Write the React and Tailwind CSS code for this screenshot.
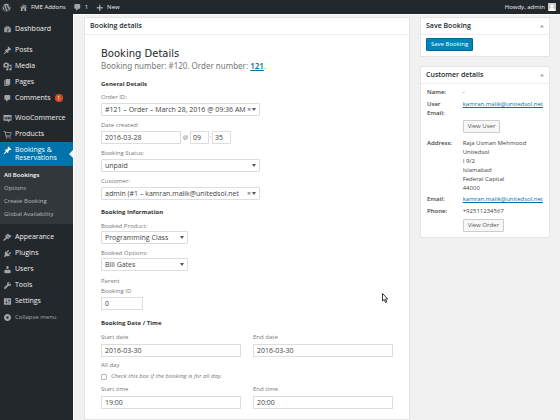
import React, { useState } from 'react';
import { FaWordpress } from 'react-icons/fa';

// 20x20 admin glyphs
const GLYPHS = {
  home: 'M16 8.5l1.53 1.53-1.06 1.06L10 4.6l-6.47 6.49-1.06-1.06L10 2.5l4 4v-2h2v4zm-6-2.46l6 5.99V18H4v-5.97zM12 17v-5H8v5h4z',
  plus: 'M17 9v3h-5v5H9v-5H4V9h5V4h3v5h5z',
  dashboard: 'M3.76 16h12.48c1.1-1.37 1.76-3.11 1.76-5 0-4.42-3.58-8-8-8s-8 3.58-8 8c0 1.89.66 3.63 1.76 5zM10 4c.55 0 1 .45 1 1s-.45 1-1 1-1-.45-1-1 .45-1 1-1zM6 6c.55 0 1 .45 1 1s-.45 1-1 1-1-.45-1-1 .45-1 1-1zm8 0c.55 0 1 .45 1 1s-.45 1-1 1-1-.45-1-1 .45-1 1-1zm-5.37 5.55L12 7v6c0 1.1-.9 2-2 2s-2-.9-2-2c0-.57.24-1.08.63-1.45zM4 10c.55 0 1 .45 1 1s-.45 1-1 1-1-.45-1-1 .45-1 1-1zm12 0c.55 0 1 .45 1 1s-.45 1-1 1-1-.45-1-1 .45-1 1-1zm-5 3c0-.55-.45-1-1-1s-1 .45-1 1 .45 1 1 1 1-.45 1-1z',
  pin: 'M10.44 3.02l1.82-1.82 6.36 6.35-1.83 1.82c-1.05-.68-2.48-.57-3.41.36l-.75.75c-.92.93-1.04 2.35-.35 3.41l-1.83 1.82-2.41-2.41-2.8 2.79c-.42.42-3.38 2.71-3.8 2.29s1.86-3.39 2.28-3.81l2.79-2.79L4.1 9.36l1.83-1.82c1.05.69 2.48.57 3.4-.36l.75-.75c.93-.92 1.05-2.35.36-3.41z',
  media: 'M13 11V4c0-.55-.45-1-1-1h-1.67L9 1H5L3.67 3H2c-.55 0-1 .45-1 1v7c0 .55.45 1 1 1h10c.55 0 1-.45 1-1zM7 4.5c1.38 0 2.5 1.12 2.5 2.5S8.38 9.5 7 9.5 4.5 8.38 4.5 7 5.62 4.5 7 4.5zM14 6h5v10.5c0 1.38-1.12 2.5-2.5 2.5S14 17.88 14 16.5s1.12-2.5 2.5-2.5c.17 0 .34.02.5.05V9h-3V6zm-4 8.05V13h2v3.5c0 1.38-1.12 2.5-2.5 2.5S7 17.88 7 16.5 8.12 14 9.5 14c.17 0 .34.02.5.05z',
  page: 'M6 15V2h10v13H6zm-1 1h8v2H3V5h2v11z',
  comment: 'M5 2h9c1.1 0 2 .9 2 2v7c0 1.1-.9 2-2 2h-2l-5 5v-5H5c-1.1 0-2-.9-2-2V4c0-1.1.9-2 2-2z',
  woo: 'M2 2h16c.6 0 1 .4 1 1v11c0 .6-.4 1-1 1h-5l1 4-5-4H2c-.6 0-1-.4-1-1V3c0-.6.4-1 1-1zm1 4l1.200 6h1.300l1-3 1 3h1L9 6H8l-.8 3.500L6.500 7h-.8l-.9 2.500L4.200 6zm7 1v4l1 1h1l1-1V7l-1-1h-1zm4 0v4l1 1h1l1-1V7l-1-1h-1z',
  cart: 'M1 2h4l.8 3H19l-2 8H7.600l.4 1.500h9V16H6.500L3.800 4H1zm5.200 4.500l1.100 5h8.500l1.200-5zM8 17a1.300 1.300 0 1 1 0 2.600A1.300 1.300 0 0 1 8 17zm7.500 0a1.300 1.300 0 1 1 0 2.600 1.300 1.300 0 0 1 0-2.600z',
  brush: 'M14.48 11.06L7.41 3.99l1.5-1.5c.5-.56 2.3-.47 3.51.32 1.21.8 1.43 1.28 2.91 2.1 1.18.64 2.45 1.26 4.45.85zm-.71.71L6.7 4.7 4.93 6.47c-.39.39-.39 1.02 0 1.41l1.06 1.06c.39.39.39 1.03 0 1.42-.6.6-1.43 1.11-2.21 1.69-.35.26-.7.53-1.01.84C1.43 14.23.4 16.08 1.4 17.07c.99 1 2.84-.03 4.18-1.36.31-.31.58-.66.85-1.02.57-.78 1.08-1.61 1.69-2.21.39-.39 1.02-.39 1.41 0l1.06 1.06c.39.39 1.02.39 1.41 0z',
  plug: 'M13.11 4.36L9.87 7.6 8 5.73l3.24-3.24c.35-.34 1.05-.2 1.56.32.52.51.66 1.21.31 1.55zm-8 1.77l.91-1.12 9.01 9.01-1.19.84c-.71.71-2.63 1.16-3.82 1.16H6.14L4.9 17.26c-.59.59-1.54.59-2.12 0-.59-.58-.59-1.53 0-2.12l1.24-1.24v-3.88c0-1.13.4-3.19 1.09-3.89zm7.26 3.97l3.24-3.24c.34-.35 1.04-.21 1.55.31.52.51.66 1.21.31 1.55l-3.24 3.25z',
  user: 'M10 9.25c-2.27 0-2.73-3.44-2.73-3.44C7 4.02 7.82 2 9.97 2c2.16 0 2.98 2.02 2.71 3.81 0 0-.41 3.44-2.68 3.44zm0 2.57L12.72 10c2.39 0 4.52 2.33 4.52 4.53v2.49s-3.65 1.13-7.24 1.13c-3.65 0-7.24-1.13-7.24-1.13v-2.49c0-2.25 1.94-4.48 4.47-4.48z',
  wrench: 'M16.68 9.77c-1.34 1.34-3.3 1.67-4.95.99l-5.41 6.52c-.99.99-2.59.99-3.58 0s-.99-2.59 0-3.57l6.52-5.42c-.68-1.65-.35-3.61.99-4.95 1.28-1.28 3.12-1.62 4.72-1.06l-2.89 2.89 2.82 2.82 2.86-2.87c.53 1.58.18 3.39-1.08 4.65zM3.81 16.21c.4.39 1.04.39 1.43 0 .4-.4.4-1.04 0-1.43-.39-.4-1.03-.4-1.43 0-.39.39-.39 1.03 0 1.43z',
  settings: 'M18 16V4c0-.55-.45-1-1-1H3c-.55 0-1 .45-1 1v12c0 .55.45 1 1 1h14c.55 0 1-.45 1-1zM8 11h1c.55 0 1 .45 1 1s-.45 1-1 1H8v1.5c0 .28-.22.5-.5.5s-.5-.22-.5-.5V13H6c-.55 0-1-.45-1-1s.45-1 1-1h1V5.5c0-.28.22-.5.5-.5s.5.22.5.5V11zm5-2h-1c-.55 0-1-.45-1-1s.45-1 1-1h1V5.5c0-.28.22-.5.5-.5s.5.22.5.5V7h1c.55 0 1 .45 1 1s-.45 1-1 1h-1v5.5c0 .28-.22.5-.5.5s-.5-.22-.5-.5V9z',
  collapse: 'M10 2.16c4.33 0 7.84 3.51 7.84 7.84s-3.51 7.84-7.84 7.84S2.16 14.33 2.16 10 5.71 2.16 10 2.16zm2 11.72V6.12L6.18 9.97z',
};

function Glyph({ name, className = 'text-[#a0a5aa]' }) {
  return (
    <svg viewBox="0 0 20 20" fill="currentColor" fillRule="evenodd" aria-hidden="true" className={`h-[9px] w-[9px] shrink-0 ${className}`}>
      <path d={GLYPHS[name]} />
    </svg>
  );
}

function MenuItem({ icon, label, badge }) {
  return (
    <li>
      <a href="#" className="flex h-4 items-center gap-[3px] pl-[3px]">
        <Glyph name={icon} />
        {label}
        {badge ? <span className="ml-px flex h-2 w-2 items-center justify-center rounded-full bg-[#d54e21] text-[5px] leading-none text-white">{badge}</span> : null}
      </a>
    </li>
  );
}

function Sidebar() {
  return (
    <nav className="w-[73px] shrink-0 bg-[#23282d] pt-[7px] text-[7px] text-[#eee]">
      <ul><MenuItem icon="dashboard" label="Dashboard" /></ul>
      <ul className="mt-[5px]">
        <MenuItem icon="pin" label="Posts" />
        <MenuItem icon="media" label="Media" />
        <MenuItem icon="page" label="Pages" />
        <MenuItem icon="comment" label="Comments" badge="1" />
      </ul>
      <ul className="mt-1">
        <MenuItem icon="woo" label="WooCommerce" />
        <MenuItem icon="cart" label="Products" />
        <li>
          <a href="#" className="relative flex gap-[3px] bg-[#0073aa] py-1 pl-[3px] leading-[8px] text-white">
            <Glyph name="pin" className="text-white" />
            <span>Bookings &amp;<br />Reservations</span>
            <span className="absolute top-1/2 right-0 -mt-1 h-2 w-1 bg-[#f1f1f1] [clip-path:polygon(100%_0,100%_100%,0_50%)]" />
          </a>
          <ul className="bg-[#32373c] py-[3px] pl-1 text-[6px] text-[#b4b9be]">
            <li><a href="#" className="flex h-[13px] items-center font-semibold text-white">All Bookings</a></li>
            <li><a href="#" className="flex h-[13px] items-center">Options</a></li>
            <li><a href="#" className="flex h-[13px] items-center">Create Booking</a></li>
            <li><a href="#" className="flex h-[13px] items-center">Global Availability</a></li>
          </ul>
        </li>
      </ul>
      <ul className="mt-[5px]">
        <MenuItem icon="brush" label="Appearance" />
        <MenuItem icon="plug" label="Plugins" />
        <MenuItem icon="user" label="Users" />
        <MenuItem icon="wrench" label="Tools" />
        <MenuItem icon="settings" label="Settings" />
      </ul>
      <button type="button" className="flex h-4 items-center gap-[3px] pl-[3px] text-[6px] text-[#a0a5aa]">
        <Glyph name="collapse" /> Collapse menu
      </button>
    </nav>
  );
}

function AdminBar() {
  return (
    <header className="flex h-3.5 items-center bg-[#23282d] pr-1 pl-0.5 text-[6px] text-[#eee]">
      <a href="#" aria-label="WordPress"><FaWordpress className="h-[9px] w-[9px] text-[#a0a5aa]" /></a>
      <a href="#" className="ml-2 flex items-center gap-[3px]"><Glyph name="home" />FME Addons</a>
      <a href="#" className="ml-[7px] flex items-center gap-[3px]"><Glyph name="comment" />1</a>
      <a href="#" className="ml-[7px] flex items-center gap-[3px]"><Glyph name="plus" />New</a>
      <a href="#" className="ml-auto flex items-center gap-[3px]">
        Howdy, admin
        <svg viewBox="0 0 16 16" className="h-2 w-2 bg-[#c8c8c8]" aria-hidden="true">
          <circle cx="8" cy="6" r="3.500" fill="#fff" />
          <path d="M2 16c0-4 2-6 6-6s6 2 6 6z" fill="#fff" />
        </svg>
      </a>
    </header>
  );
}

function Panel({ title, toggle, children }) {
  return (
    <section className="border border-[#e5e5e5] bg-white">
      <div className="flex h-[17px] items-center justify-between border-b border-[#eee] px-[5px]">
        <h2 className="text-[7px] font-semibold text-[#23282d]">{title}</h2>
        {toggle ? (
          <button type="button" aria-label={`Toggle ${title}`}>
            <span className="block h-[3px] w-1 bg-[#aaa] [clip-path:polygon(50%_0,100%_100%,0_100%)]" />
          </button>
        ) : null}
      </div>
      {children}
    </section>
  );
}

const control = 'block h-[13px] w-full border border-[#ddd] bg-white text-[7px] leading-[11px] text-[#444]';

function TextField({ id, label, value, className = '' }) {
  return (
    <div className={className}>
      <label htmlFor={id} className="block leading-[8px]">{label}</label>
      <input id={id} defaultValue={value} className={`${control} mt-[3px] px-[3px]`} />
    </div>
  );
}

function SelectField({ id, label, value, clearable, className = '', gap = 'mt-0.5' }) {
  const [current, setCurrent] = useState(value);
  return (
    <div className={className}>
      <label htmlFor={id} className="block leading-[8px]">{label}</label>
      <div className={`relative ${gap}`}>
        <select id={id} value={current} onChange={e => setCurrent(e.target.value)} className={`${control} appearance-none rounded-[1px] pr-2.5 pl-[3px]`}>
          <option value="" />
          <option value={value}>{value}</option>
        </select>
        {clearable ? (
          <button type="button" aria-label={`Clear ${label}`} onClick={() => setCurrent('')} className="absolute inset-y-0 right-[9px] text-[7px] leading-[13px] text-[#555]">×</button>
        ) : null}
        <span className="pointer-events-none absolute top-[5px] right-1 h-[3px] w-1 bg-[#555] [clip-path:polygon(0_0,100%_0,50%_100%)]" />
      </div>
    </div>
  );
}

function BookingForm() {
  return (
    <form className="px-4 pt-3 pb-[10px] text-[6px] text-[#777]">
      <h1 className="font-['DejaVu_Sans',sans-serif] text-[10px] leading-[13px] text-[#23282d]">Booking Details</h1>
      <p className="font-['Noto_Sans',sans-serif] text-[8px] leading-[11px]">
        Booking number: #120. Order number: <a href="#" className="font-semibold text-[#0073aa] underline">121</a>.
      </p>

      <h3 className="mt-[9px] font-bold leading-[9px] text-[#333]">General Details</h3>
      <SelectField id="order" label="Order ID:" value="#121 – Order – March 28, 2016 @ 09:36 AM" clearable className="mt-1 w-[159px]" />
      <div className="mt-[5px]">
        <label htmlFor="created" className="block leading-[8px]">Date created:</label>
        <div className="mt-0.5 flex items-center">
          <input id="created" defaultValue="2016-03-28" className={`${control} max-w-[80px] px-[3px]`} />
          <span className="w-[9px] text-center">@</span>
          <input aria-label="Hour" defaultValue="09" className={`${control} max-w-[19px] px-0.5`} />
          <span className="w-[3px] text-center">:</span>
          <input aria-label="Minute" defaultValue="35" className={`${control} max-w-[19px] px-0.5`} />
        </div>
      </div>
      <SelectField id="status" label="Booking Status:" value="unpaid" className="mt-[5px] w-[159px]" />
      <SelectField id="customer" label="Customer:" value="admin (#1 – kamran.malik@unitedsol.net" clearable className="mt-[5px] w-[159px]" />

      <h3 className="mt-2 font-bold leading-[9px] text-[#333]">Booking Information</h3>
      <SelectField id="product" label="Booked Product:" value="Programming Class" className="mt-[5px] w-[87px]" gap="mt-px" />
      <SelectField id="options" label="Booked Options:" value="Bill Gates" className="mt-[5px] w-[87px]" gap="mt-px" />
      <div className="mt-[5px] w-[42px]">
        <label htmlFor="parent" className="block leading-[10px]">Parent<br />Booking ID</label>
        <input id="parent" defaultValue="0" className={`${control} mt-px px-[3px]`} />
      </div>

      <h3 className="mt-[9px] font-bold leading-[9px] text-[#333]">Booking Date / Time</h3>
      <div className="mt-[5px] grid grid-cols-2 gap-x-3 gap-y-1">
        <TextField id="start-date" label="Start date" value="2016-03-30" />
        <TextField id="end-date" label="End date" value="2016-03-30" />
        <div className="col-span-2">
          <div className="leading-[9px]">All day</div>
          <label className="mt-0.5 flex h-[9px] items-center gap-1 italic">
            <input type="checkbox" className="h-1.5 w-1.5 appearance-none rounded-[1px] border border-[#b4b9be] bg-white checked:bg-[#0073aa]" />
            Check this box if the booking is for all day.
          </label>
        </div>
        <TextField id="start-time" label="Start time" value="19:00" />
        <TextField id="end-time" label="End time" value="20:00" />
      </div>
    </form>
  );
}

function DetailRow({ label, children, className = '' }) {
  return (
    <tr className="align-top">
      <th scope="row" className={`w-9 text-left font-semibold ${className}`}>{label}</th>
      <td className={className}>{children}</td>
    </tr>
  );
}

const smallButton = 'block h-[13px] rounded-[1px] border border-[#ccc] bg-[#f7f7f7] px-1 text-[6px] leading-[11px] text-[#555]';

function CustomerDetails() {
  return (
    <table className="mx-1.5 mt-1 mb-[5px] text-[6px] leading-[9px] text-[#444]">
      <tbody>
        <DetailRow label="Name:">-</DetailRow>
        <DetailRow label={<>User<br />Email:</>} className="pt-[3px]">
          <a href="#" className="text-[#0073aa] underline">kamran.malik@unitedsol.net</a>
        </DetailRow>
        <DetailRow className="pt-0.5"><button type="button" className={smallButton}>View User</button></DetailRow>
        <DetailRow label="Address:" className="pt-1.5">
          Raja Usman Mehmood<br />Unitedsol<br />I 9/2<br />Islamabad<br />Federal Capital<br />44000
        </DetailRow>
        <DetailRow label="Email:" className="pt-0.5">
          <a href="#" className="text-[#0073aa] underline">kamran.malik@unitedsol.net</a>
        </DetailRow>
        <DetailRow label="Phone:" className="pt-[3px]">+92511234567</DetailRow>
        <DetailRow className="pt-[3px]"><button type="button" className={smallButton}>View Order</button></DetailRow>
      </tbody>
    </table>
  );
}

export default function App() {
  return (
    <div className="relative flex min-h-screen flex-col bg-[#f1f1f1] font-['Open_Sans',sans-serif]">
      <AdminBar />
      <div className="flex flex-1">
        <Sidebar />
        <main className="flex min-w-0 flex-1 items-start gap-2.5 border-t border-l border-white px-2.5 pt-0.5">
          <div className="min-w-0 flex-1">
            <Panel title="Booking details"><BookingForm /></Panel>
          </div>
          <aside className="flex w-[130px] shrink-0 flex-col gap-[9px]">
            <Panel title="Save Booking" toggle>
              <div className="px-[5px] pt-[3px] pb-[5px]">
                <button type="button" className="block h-[13px] rounded-[1px] border border-[#006799] bg-[#0085ba] px-1 text-[6px] leading-[11px] text-white">Save Booking</button>
              </div>
            </Panel>
            <Panel title="Customer details" toggle><CustomerDetails /></Panel>
          </aside>
        </main>
      </div>
      {/* mouse pointer */}
      <svg viewBox="0 0 12 20" className="pointer-events-none absolute top-[293px] left-[382px] h-[10px] w-1.5" aria-hidden="true">
        <path d="M1 1v15l3.500-3 2.500 6 2.500-1-2.500-6H11.500z" fill="#fff" stroke="#222" strokeWidth="1.800" />
      </svg>
    </div>
  );
}
